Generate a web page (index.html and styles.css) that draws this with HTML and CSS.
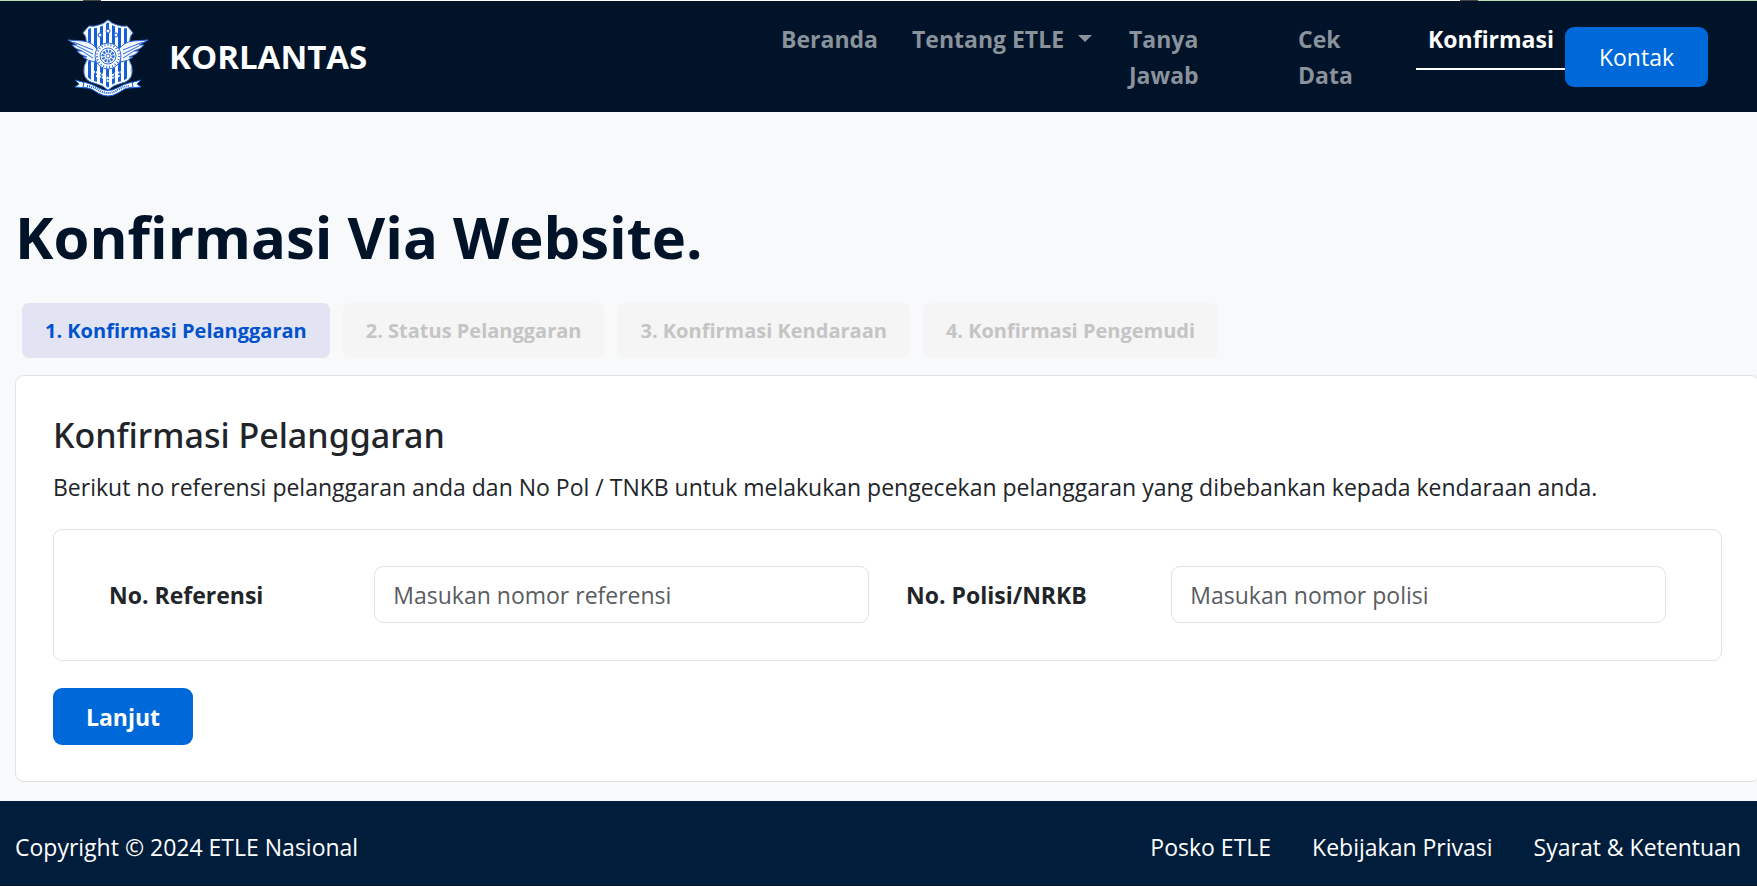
FILE: index.html
```
<!DOCTYPE html>
<html lang="id">
<head>
<meta charset="UTF-8" />
<meta name="viewport" content="width=device-width, initial-scale=1" />
<title>Konfirmasi - ETLE Nasional</title>
<link rel="stylesheet" href="styles.css">
</head>
<body>
  <div class="top-strip"></div>
  <header class="navbar">
    <a class="brand" href="#">
      <svg class="logo" viewBox="0 -4 80 81" aria-hidden="true">
        <defs>
          <pattern id="stripes" width="6" height="80" x="2" patternUnits="userSpaceOnUse">
            <rect width="6" height="80" fill="#fff" />
            <rect width="3" height="80" fill="#1560d8" />
          </pattern>
        </defs>
        <!-- shield -->
        <path d="M40 1 Q36 5 31 6 Q26 8 21 7 L16 13 Q20 16 19 24 L20 40 Q16 46 17 53 Q18 60 26 62 Q35 64 40 69 Q45 64 54 62 Q62 60 63 53 Q64 46 60 40 L61 24 Q60 16 64 13 L59 7 Q54 8 49 6 Q44 5 40 1Z" fill="url(#stripes)" stroke="#fff" stroke-width="2" />
        <path d="M40 0 Q36 4 31 5 Q26 7 21 6 L15 13 Q19 16 18 24 L19 40 Q15 46 16 53 Q17 61 26 63 Q35 65 40 70 Q45 65 54 63 Q63 61 64 53 Q65 46 61 40 L62 24 Q61 16 65 13 L59 6 Q54 7 49 5 Q44 4 40 0Z" fill="none" stroke="#3f7fe2" stroke-width="1" />
        <!-- wings -->
        <g fill="#f4f8ff" stroke="#2d6bd6" stroke-width="1">
          <path d="M0 20 L15 21 Q24 22 29 29 L27 42 Q20 41 15 37 L19 37 Q12 35 9 31 L14 31 Q7 29 4 25 L9 25Z" />
          <path d="M5 22 L25 30 M9 26 L25 34 M14 31 L25 38" fill="none" />
          <path d="M80 20 L65 21 Q56 22 51 29 L53 42 Q60 41 65 37 L61 37 Q68 35 71 31 L66 31 Q73 29 76 25 L71 25Z" />
          <path d="M75 22 L55 30 M71 26 L55 34 M66 31 L55 38" fill="none" />
        </g>
        <!-- stars -->
        <g fill="#fff" stroke="#1560d8">
          <circle cx="40" cy="11" r="2" />
          <circle cx="32" cy="15" r="2" />
          <circle cx="48" cy="15" r="2" />
        </g>
        <!-- wheel -->
        <g fill="none" stroke="#2d6bd6">
          <circle cx="40" cy="36" r="13" fill="#fff" />
          <circle cx="40" cy="36" r="11" stroke-width="2" stroke-dasharray="1 2" />
          <circle cx="40" cy="36" r="8" />
          <circle cx="40" cy="36" r="5" stroke-width="3" stroke-dasharray="2 1" />
          <circle cx="40" cy="36" r="2" />
        </g>
        <path d="M25 52 Q32 52 40 58 Q48 52 55 52 M28 56 Q34 56 40 61 Q46 56 52 56" fill="none" stroke="#fff" stroke-width="2" stroke-dasharray="2 1" />
        <!-- ribbon -->
        <g fill="#fff" stroke="#1560d8" stroke-width="1">
          <path d="M7 60 L18 63 L18 68 L7 67 L11 64Z M73 60 L62 63 L62 68 L73 67 L69 64Z" />
          <path d="M16 62 Q24 64 31 68 Q40 73 49 68 Q56 64 64 62 L65 67 Q56 68 50 73 Q40 79 30 73 Q24 68 15 67Z" />
          <path d="M19 66 Q27 67 32 71 Q40 75 48 71 Q53 67 61 66" fill="none" stroke-width="2" stroke-dasharray="1 1" />
        </g>
      </svg>
      <span>KORLANTAS</span>
    </a>
    <nav>
      <ul class="nav-list">
        <li class="w-beranda"><a href="#">Beranda</a></li>
        <li class="w-tentang"><a class="dropdown" href="#">Tentang ETLE</a></li>
        <li class="w-tanya"><a href="#">Tanya Jawab</a></li>
        <li class="w-cek"><a href="#">Cek Data</a></li>
        <li class="w-konfirmasi"><a class="active" href="#">Konfirmasi</a></li>
      </ul>
    </nav>
    <button class="btn btn-kontak" type="button">Kontak</button>
  </header>

  <main>
    <h1>Konfirmasi Via Website.</h1>
    <ol class="steps">
      <li class="current">1. Konfirmasi Pelanggaran</li>
      <li>2. Status Pelanggaran</li>
      <li>3. Konfirmasi Kendaraan</li>
      <li>4. Konfirmasi Pengemudi</li>
    </ol>

    <form class="card">
      <h2>Konfirmasi Pelanggaran</h2>
      <p>Berikut no referensi pelanggaran anda dan No Pol / TNKB untuk melakukan pengecekan pelanggaran yang dibebankan kepada kendaraan anda.</p>
      <div class="fields">
        <label for="referensi">No. Referensi</label>
        <input id="referensi" type="text" placeholder="Masukan nomor referensi" />
        <label for="polisi">No. Polisi/NRKB</label>
        <input id="polisi" type="text" placeholder="Masukan nomor polisi" />
      </div>
      <button class="btn btn-lanjut" type="button">Lanjut</button>
    </form>
  </main>

  <footer>
    <span>Copyright © 2024 ETLE Nasional</span>
    <div class="footer-links">
      <a href="#">Posko ETLE</a>
      <a href="#">Kebijakan Privasi</a>
      <a href="#">Syarat &amp; Ketentuan</a>
    </div>
  </footer>
</body>
</html>
```
FILE: styles.css
```
* {
  box-sizing: border-box;
}

body {
  margin: 0;
  min-height: 100vh;
  display: flex;
  flex-direction: column;
  background-color: #f8f9fb;
  color: #212529;
  font-family: "Open Sans", "Noto Sans", sans-serif;
  font-size: 23px;
  line-height: 36px;
  overflow-x: hidden;
}

a {
  color: inherit;
  text-decoration: none;
}

.top-strip {
  height: 1px;
  background: linear-gradient(to right, #b9dfb9 83px, #444 83px 101px, #fff 101px calc(100% - 297px), #444 calc(100% - 297px) calc(100% - 279px), #b9dfb9 calc(100% - 279px));
}

.navbar {
  display: flex;
  align-items: center;
  height: 111px;
  padding: 0 49px 0 68px;
  background-color: #001329;
  color: #fff;
}

.brand {
  display: flex;
  align-items: center;
  gap: 21px;
  font-size: 33px;
  font-weight: 700;
}

.logo {
  width: 80px;
  height: 81px;
}

nav {
  align-self: flex-start;
  margin-left: auto;
}

.nav-list {
  display: flex;
  gap: 14px;
  margin: 0;
  padding: 8px 0 0;
  list-style: none;
}

.nav-list a {
  display: block;
  padding: 12px;
  color: #8a929c;
  font-weight: 700;
}

.nav-list .active {
  color: #fff;
  padding-bottom: 11px;
  border-bottom: 2px solid #fff;
}

.w-beranda {
  width: 117px;
}

.w-tentang {
  width: 203px;
  white-space: nowrap;
}

.w-tanya {
  width: 155px;
}

.w-cek {
  width: 116px;
}

.w-konfirmasi {
  width: 149px;
}

.dropdown::after {
  content: "";
  display: inline-block;
  margin-left: 14px;
  vertical-align: 6px;
  border-top: 7px solid;
  border-left: 7px solid transparent;
  border-right: 7px solid transparent;
}

.btn {
  border: 0;
  border-radius: 9px;
  background-color: #0069d9;
  color: #fff;
  font: inherit;
  cursor: pointer;
}

.btn-kontak {
  width: 143px;
  height: 60px;
}

main {
  flex: 1;
  padding: 86px 0 19px 15px;
}

h1 {
  margin: 0 0 27px;
  color: #001329;
  font-size: 58px;
  font-weight: 700;
  line-height: 78px;
}

.steps {
  display: flex;
  gap: 13px;
  margin: 0 0 17px;
  padding: 0 0 0 7px;
  list-style: none;
}

.steps li {
  padding: 10px 23px 9px;
  border-radius: 7px;
  background-color: #f5f5f5;
  color: #c4c4c4;
  font-size: 20px;
  font-weight: 700;
}

.steps .current {
  background-color: #e2e4f4;
  color: #0052cc;
}

.card {
  margin-right: -3px;
  padding: 38px 37px 36px;
  border: 1px solid #dee2e6;
  border-radius: 9px;
  background-color: #fff;
}

h2 {
  margin: 0 0 12px;
  font-family: "Noto Sans", "Open Sans", sans-serif;
  font-size: 34px;
  font-weight: 500;
  line-height: 43px;
}

.card p {
  margin: 0 0 24px;
}

.fields {
  display: grid;
  grid-template-columns: 6fr 13fr 6fr 13fr;
  column-gap: 37px;
  align-items: center;
  padding: 36px 55px 37px;
  border: 1px solid #dee2e6;
  border-radius: 9px;
}

.fields label {
  font-weight: 700;
}

.fields input {
  width: 100%;
  min-width: 0;
  height: 57px;
  padding: 0 18px;
  border: 1px solid #dee2e6;
  border-radius: 9px;
  background-color: #fff;
  font: inherit;
}

.fields input::placeholder {
  color: #595c5f;
  opacity: 1;
}

.btn-lanjut {
  width: 140px;
  height: 57px;
  margin-top: 27px;
  font-weight: 700;
}

footer {
  display: flex;
  justify-content: space-between;
  align-items: center;
  min-height: 85px;
  padding: 8px 16px 0 15px;
  border-bottom: 1px solid #001329;
  background-color: #001e3c;
  color: #fff;
}

.footer-links {
  display: flex;
  gap: 41px;
}
```
